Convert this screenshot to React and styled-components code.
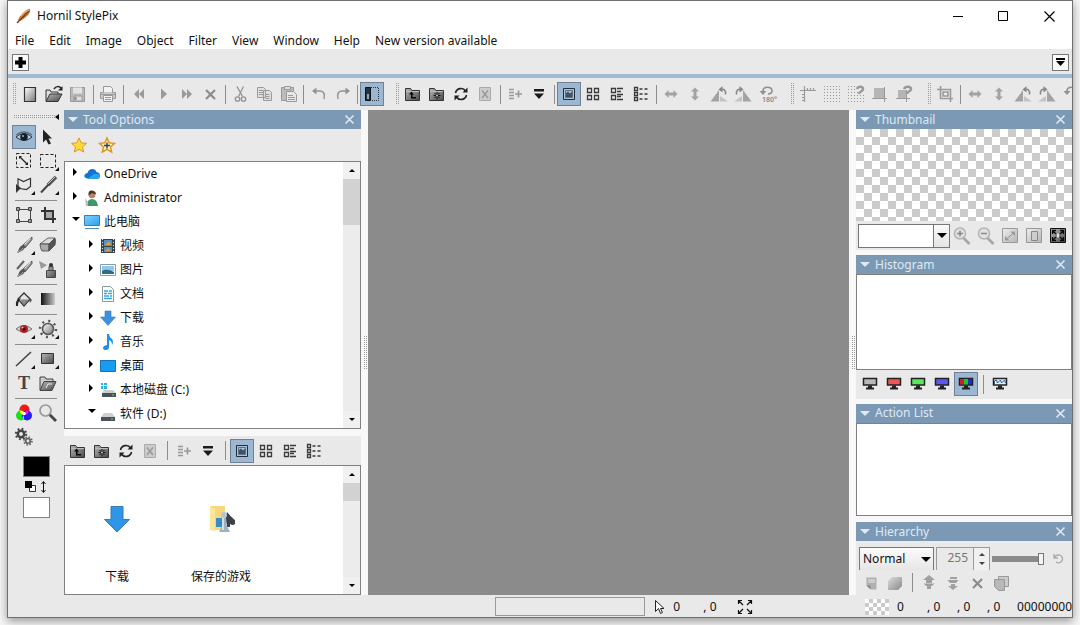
import React, { useState } from "react";
import styled, { createGlobalStyle, css } from "styled-components";

const GlobalStyle = createGlobalStyle`
    * {
        box-sizing: border-box;
    }
    body {
        margin: 0;
        background: #f6f6f6;
        color: #111;
        font-family: "Noto Sans", "Noto Sans CJK SC", sans-serif;
        font-size: 12px;
        line-height: 16px;
    }
    button, input, select {
        font: inherit;
        color: inherit;
        margin: 0;
        padding: 0;
        border: 0;
        border-radius: 0;
        background: none;
    }
    svg {
        display: block;
        flex: none;
    }
`

const Desktop = styled.div`
    display: flex;
    height: 100vh;
    min-height: 600px;
    padding: 0 7px 7px;
    overflow: hidden;
`
const Window = styled.div`
    flex: 1;
    min-width: 0;
    display: flex;
    flex-direction: column;
    border: 1px solid #707070;
    background: #e9e9e9;
    box-shadow: 0 3px 9px rgba(0, 0, 0, 0.4);
`
const TitleBar = styled.header`
    display: flex;
    align-items: center;
    height: 30px;
    padding-left: 8px;
    background: white;
    h1 {
        flex: 1;
        margin: 0 0 0 5px;
        font-size: 12px;
        font-weight: 400;
    }
`
const WindowButton = styled.button`
    display: grid;
    place-items: center;
    width: 46px;
    height: 30px;
    &:hover {
        background: #e5e5e5;
    }
`
const MenuBar = styled.nav`
    display: flex;
    height: 18px;
    padding-left: 7px;
    gap: 15px;
    background: white;
    button {
        line-height: 20px;
        white-space: nowrap;
    }
`
const TabBar = styled.div`
    display: flex;
    align-items: center;
    justify-content: space-between;
    height: 29px;
    padding: 1px 3px 0 4px;
    border-bottom: 4px solid #a0bad2;
`
const TabButton = styled.button`
    display: grid;
    place-items: center;
    width: 17px;
    height: 17px;
    border: 1px solid #777;
    background: #fafafa;
`
const ToolBar = styled.div`
    display: flex;
    align-items: center;
    gap: 7px;
    height: 32px;
    overflow: hidden;
`
const ToolGroup = styled.div`
    display: flex;
    flex: none;
    align-items: center;
`
const dots = css`
    background-image: conic-gradient(#9a9a9a 25%, transparent 0);
    background-size: 2px 2px;
`
const Grip = styled.span`
    width: 4px;
    height: 22px;
    margin: 0 2px 0 4px;
    ${dots}
`
const ToolButton = styled.button`
    position: relative;
    display: grid;
    place-items: center;
    flex: none;
    width: 24px;
    height: 24px;
    ${({ $active }) => $active && css`
        background: #9bb7d2;
        box-shadow: inset 0 0 0 1px #6f8193;
    `}
`
const Corner = styled.i`
    position: absolute;
    right: 1px;
    bottom: 2px;
    border: 2px solid transparent;
    border-right-color: #111;
    border-bottom-color: #111;
`
const Separator = styled.span`
    display: flex;
    justify-content: center;
    flex: none;
    width: ${({ $wide }) => ($wide ? 10 : 6)}px;
    height: 19px;
    &::before {
        content: "";
        width: 1px;
        background: #8d8d8d;
    }
`
const Main = styled.main`
    flex: 1;
    min-height: 0;
    display: grid;
    grid-template-columns: 56px 297px 7px minmax(0, 1fr) 7px 216px;
`
const ToolBox = styled.aside`
    display: flex;
    flex-direction: column;
    padding: 0 4px;
`
const ToolBoxGrip = styled.div`
    display: flex;
    align-items: center;
    justify-content: space-between;
    height: 15px;
    padding: 0 1px 2px;
    span {
        width: 42px;
        height: 4px;
        ${dots}
    }
`
const ToolRow = styled.div`
    display: flex;
`
const ToolRule = styled.hr`
    width: 42px;
    height: 6px;
    margin: 0 3px;
    border: 0;
    background: linear-gradient(#8d8d8d, #8d8d8d) center / 100% 1px no-repeat;
`
const Colors = styled.div`
    display: flex;
    flex-direction: column;
    align-items: center;
    gap: 3px;
    padding-top: 7px;
`
const Swatch = styled.button`
    width: 27px;
    height: 21px;
    border: 1px solid #808080;
    background: ${({ $color }) => $color};
`
const Column = styled.div`
    display: flex;
    flex-direction: column;
    min-width: 0;
    min-height: 0;
`
const Splitter = styled.div`
    display: flex;
    align-items: center;
    justify-content: center;
    background: #f8f8f8;
    span {
        width: 4px;
        height: 34px;
        ${dots}
    }
`
const Gap = styled.div`
    flex: none;
    height: ${({ $size }) => $size || 5}px;
    background: #f8f8f8;
`
const PanelHeader = styled.header`
    display: flex;
    align-items: center;
    flex: none;
    height: 19px;
    padding: 0 6px 0 4px;
    background: #7b99b5;
    color: #dfeaf4;
    h2 {
        flex: 1;
        margin: 0 0 0 5px;
        font-size: 12px;
        font-weight: 400;
    }
`
const StarRow = styled.div`
    display: flex;
    align-items: center;
    flex: none;
    gap: 4px;
    height: 32px;
    padding-left: 3px;
`
const Box = styled.div`
    flex: ${({ $grow }) => $grow} 1 0;
    display: flex;
    min-height: 0;
    border: 1px solid #808080;
    background: white;
    overflow: hidden;
`
const Tree = styled.ul`
    flex: 1;
    margin: 0;
    padding: 0;
    list-style: none;
    overflow: hidden;
`
const TreeRow = styled.li`
    display: flex;
    align-items: center;
    height: 24px;
    padding-left: ${({ $level }) => 3 + $level * 16}px;
    button {
        height: 24px;
    }
    span {
        margin-left: 4px;
    }
`
const ScrollBar = styled.div`
    display: flex;
    flex-direction: column;
    width: 17px;
    background: #ececec;
    button {
        display: grid;
        place-items: center;
        height: 17px;
        background: #f0f0f0;
    }
`
const ScrollTrack = styled.div`
    flex: 1;
    &::before {
        content: "";
        display: block;
        height: ${({ $thumb }) => $thumb}px;
        background: #d2d2d2;
    }
`
const PanelTools = styled.div`
    display: flex;
    align-items: center;
    flex: none;
    height: 29px;
    padding-left: 2px;
`
const Files = styled.div`
    flex: 1;
    display: flex;
`
const FileItem = styled.button`
    display: flex;
    flex-direction: column;
    align-items: center;
    justify-content: flex-end;
    gap: 36px;
    width: 104px;
    padding-bottom: 9px;
`
const Canvas = styled.section`
    background: #8b8b8b;
`
const checker = css`
    background: white repeating-conic-gradient(#cbcbcb 0 25%, white 0 50%);
`
const Preview = styled.div`
    flex: none;
    height: 92px;
    ${checker}
    background-size: 16px 16px;
`
const ZoomBox = styled.div`
    display: flex;
    width: 92px;
    height: 24px;
    border: 1px solid #777;
    background: white;
    input {
        flex: 1;
        min-width: 0;
        padding: 0 4px;
    }
    button {
        display: grid;
        place-items: center;
        width: 16px;
        border-left: 1px solid #777;
        background: linear-gradient(#fafafa, #e4e4e4);
    }
`
const LayerControls = styled.div`
    display: flex;
    align-items: center;
    flex: none;
    gap: 2px;
    height: 29px;
    padding: 6px 2px 0 3px;
`
const BlendMode = styled.label`
    position: relative;
    width: 75px;
    select {
        appearance: none;
        width: 100%;
        height: 23px;
        padding-left: 3px;
        border: 1px solid #777;
        border-bottom: 0;
        background: linear-gradient(#fbfbfb, #e6e6e6);
    }
    svg {
        position: absolute;
        right: 3px;
        top: 10px;
        pointer-events: none;
    }
`
const Opacity = styled.div`
    display: flex;
    width: 54px;
    height: 23px;
    border: 1px solid #999;
    border-bottom: 0;
    color: #777;
    input {
        flex: 1;
        min-width: 0;
        padding: 0 5px 2px;
        text-align: right;
        border-right: 1px solid #999;
    }
    div {
        display: flex;
        flex-direction: column;
        justify-content: space-evenly;
        width: 15px;
        background: #f0f0f0;
    }
    button {
        display: grid;
        place-items: center;
    }
`
const Slider = styled.input`
    appearance: none;
    width: 52px;
    height: 14px;
    &::-webkit-slider-runnable-track {
        height: 6px;
        background: #8b8b8b;
    }
    &::-webkit-slider-thumb {
        appearance: none;
        width: 6px;
        height: 12px;
        margin-top: -3px;
        border: 1px solid #777;
        background: #f4f4f4;
    }
`
const LayerTools = styled.div`
    display: flex;
    align-items: center;
    flex: none;
    height: 25px;
    padding-left: 3px;
`
const StatusBar = styled.footer`
    display: flex;
    align-items: center;
    flex: none;
    height: 22px;
    padding-top: 1px;
    overflow: hidden;
    white-space: pre;
`
const StatusLeft = styled.div`
    flex: 638;
    display: flex;
    justify-content: flex-end;
`
const StatusMiddle = styled.div`
    flex: 220;
    display: flex;
    align-items: center;
`
const Progress = styled.div`
    width: 150px;
    height: 19px;
    border: 1px solid #999;
`
const Value = styled.span`
    width: ${({ $wide }) => ($wide ? 34 : 30)}px;
`
const Pixel = styled.span`
    width: 24px;
    height: 16px;
    margin-right: 8px;
    ${checker}
    background-size: 8px 8px;
`

const folder = (
    <>
        <path d="M4.500 18.500V6.500h5l1.500 2h7.500v10z" fill="url(#dark)" stroke="#333" />
        <path d="M5 9.500h13" stroke="#bbb" />
    </>
)
const monitor = (fill) => (
    <>
        <path d="M5.500 6.500h13v6.500h-13z" fill={fill} stroke="#222" strokeWidth="1.500" />
        <path d="M10 13.500h4v2.500h-4zM8 15.500h8v2H8z" fill="#222" />
    </>
)
const brush = (
    <>
        <path d="M20 4l-9 8 2.500 2.500 6.500-8z" fill="#999" stroke="#444" strokeWidth=".8" />
        <path d="M11.500 11.500l2.500 2.500c-2 1-2 4-9 6 2-2 1-6 6.500-8.500z" fill="#555" />
        <path d="M18.500 5.500l-6 6" stroke="#ddd" />
        <path d="M5 19c3-1 5-2 6-4" stroke="#aaa" fill="none" />
    </>
)
const magnifier = (
    <>
        <path d="M13.500 14l6 6" stroke="#aaa" strokeWidth="3" />
        <circle cx="10" cy="9.500" r="5.500" fill="#e2e2e2" stroke="#b4b4b4" strokeWidth="1.500" />
    </>
)
const halfTurn = (
    <>
        <path d="M8 10V9c0-5 9-5 9-.500 0 2.500-1.500 3.500-4 3.500" fill="none" stroke="#909090" strokeWidth="1.600" />
        <path d="M4.500 9h7L8 13z" fill="#909090" />
    </>
)
const layer = "M7.500 6.500h10v12h-6l-4-4z"

// all drawings share a 24px grid
const icons = {
    newFile: <path d="M6.500 5.500h11v14h-11z" fill="url(#light)" stroke="#333" strokeWidth="1.200" />,
    open: (
        <>
            <path d="M4 19V8h4l1 2h7v3l2-1" fill="#ddd" stroke="#333" />
            <path d="M4 19.500L8 12h12l-4 7.500z" fill="url(#dark)" stroke="#333" />
            <path d="M12 7c2-3 5-3 7-1" fill="none" stroke="#222" strokeWidth="1.500" />
            <path d="M20.500 4v4.500H16z" fill="#222" />
        </>
    ),
    save: (
        <>
            <path d="M4.500 5.500h14v14h-14z" fill="#b9b9b9" stroke="#999" />
            <path d="M7 5.500h9v6H7z" fill="#e2e2e2" />
            <path d="M8 14h8v5H8z" fill="#ddd" stroke="#999" />
            <path d="M9.500 15v3" stroke="#888" strokeWidth="2" />
        </>
    ),
    print: (
        <>
            <path d="M4.500 10.500h15v6h-15z" fill="#ccc" stroke="#999" />
            <path d="M7.500 10.500v-6h7l2 2v4" fill="#f2f2f2" stroke="#999" />
            <path d="M7.500 13.500h9v6h-9z" fill="#f2f2f2" stroke="#999" />
            <path d="M9 15.500h6M9 17.500h6M4.500 12.500h15" stroke="#999" />
        </>
    ),
    rewind: <path d="M13 7v10l-5-5zM18 7v10l-5-5z" fill="#9a9a9a" />,
    play: <path d="M11 6.500v11l6-5.500z" fill="#9a9a9a" />,
    forward: <path d="M8 7v10l5-5zM13 7v10l5-5z" fill="#9a9a9a" />,
    cross: <path d="M8 8l9 9M17 8l-9 9" stroke="#8c8c8c" strokeWidth="2.200" />,
    cut: (
        <g fill="none" stroke="#929292" strokeWidth="1.300">
            <path d="M9 4.500l5.500 10M15.500 4.500l-5 10" />
            <circle cx="9.500" cy="17" r="2.200" />
            <circle cx="15.500" cy="17" r="2.200" />
        </g>
    ),
    copy: (
        <g stroke="#999" fill="#e0e0e0">
            <path d="M5.500 5.500h6l2 2v8h-8zM11.500 8.500h6l2 2v8h-8z" />
            <path d="M7 8.500h4M7 10.500h4M7 12.500h4M13.500 12.500h4M13.500 14.500h4M13.500 16.500h4" />
        </g>
    ),
    paste: (
        <g stroke="#999" fill="#bbb">
            <path d="M5.500 5.500h12v13h-12z" />
            <path d="M8.500 4.500h6v3h-6z" fill="#ddd" />
            <path d="M10.500 9.500h7l3 3v7h-10z" fill="#e8e8e8" />
            <path d="M12 13.500h5M12 15.500h7M12 17.500h7" />
        </g>
    ),
    undo: (
        <g stroke="#929292" fill="none" strokeWidth="1.500">
            <path d="M9 9h5c4 0 5 3 4 8" />
            <path d="M6 9l4.500-3.500v7z" fill="#929292" stroke="none" />
        </g>
    ),
    redo: (
        <g stroke="#929292" fill="none" strokeWidth="1.500">
            <path d="M17 9h-5c-4 0-5 3-4 8" />
            <path d="M20 9l-4.500-3.500v7z" fill="#929292" stroke="none" />
        </g>
    ),
    sidebar: (
        <>
            <path d="M5.500 5.500h5v13h-5z" fill="#26323e" stroke="#111" />
            <path d="M7 12h2v5H7z" fill="#8ba5bf" />
            <path d="M11 5.500h7.500v13H11" fill="none" stroke="#26323e" strokeDasharray="1 1" />
        </>
    ),
    folderUp: <>{folder}<path d="M8 12.500l2.500-3 2.500 3h-1.500v2.500H15v1.500h-5v-4z" fill="#050505" /></>,
    folderNew: (
        <>
            {folder}
            <path d="M12 10v7.500M8.500 13.500h7M9.500 11l5 5M14.500 11l-5 5" stroke="#111" />
            <circle cx="12" cy="13.500" r="1" fill="#ccc" />
        </>
    ),
    refresh: (
        <g fill="none" stroke="#222" strokeWidth="1.600">
            <path d="M6.500 11c1-5 7.500-6 10-2M17.500 13c-1 5-7.500 6-10 2" />
            <path d="M18.500 5.500v5h-5zM5.500 18.500v-5h5z" fill="#222" stroke="none" />
        </g>
    ),
    boxCross: (
        <>
            <path d="M6.500 5.500h11v13h-11z" fill="#ccc" stroke="#aaa" />
            <path d="M9 8.500l6 7.500M15 8.500L9 16" stroke="#999" strokeWidth="1.500" />
        </>
    ),
    listAdd: <path d="M6 7.500h5M6 10.500h5M6 13.500h5M6 16.500h5M12 12h7M15.500 8.500v7" stroke="#999" strokeWidth="1.700" />,
    dropdown: <path d="M7 7h10v2.500H7zM7 11.500h10L12 17z" fill="#1b1b1b" />,
    picture: (
        <>
            <path d="M6.500 6.500h11v11h-11z" fill="#a9c3da" stroke="#222d38" />
            <path d="M8.500 8.500h7v7h-7z" fill="#a9c3da" stroke="#5c7187" />
            <path d="M9 15v-4l2-1.500 2 2 2-2V15z" fill="#3e5266" />
        </>
    ),
    tiles: <path d="M6.500 6.500h4v4h-4zM13.500 6.500h4v4h-4zM6.500 13.500h4v4h-4zM13.500 13.500h4v4h-4z" fill="#eee" stroke="#3a3a3a" strokeWidth="1.300" />,
    content: (
        <g stroke="#3a3a3a" fill="#eee" strokeWidth="1.300">
            <path d="M6.500 6.500h4v4h-4zM6.500 13.500h4v4h-4z" />
            <path d="M12 6.500h6M12 9.500h4M12 12.500h6M12 14.500h4M12 17.500h6" />
        </g>
    ),
    details: (
        <g stroke="#3a3a3a" fill="#eee" strokeWidth="1.300">
            <path d="M5.500 5.500h3v3h-3zM5.500 10.500h3v3h-3zM5.500 15.500h3v3h-3z" />
            <path d="M10.500 7h8M10.500 12h8M10.500 17h8" strokeDasharray="3 2" />
        </g>
    ),
    flipH: <path d="M5.500 12l4-4v2.500h5V8l4 4-4 4v-2.500h-5V16z" fill="#a3a3a3" />,
    flipV: <path d="M12 5.500l4 4h-2.500v5H16l-4 4-4-4h2.500v-5H8z" fill="#a3a3a3" />,
    rotateLeft: (
        <>
            <path d="M12 8v11.500H3.500z" fill="#a3a3a3" />
            <path d="M13 14l8 5.500h-8z" fill="#c2c2c2" />
            <path d="M14 7.500c3-1 5 1 4.500 5" fill="none" stroke="#888" strokeWidth="1.500" />
            <path d="M11.500 7.500L15.500 4v6.500z" fill="#888" />
        </>
    ),
    rotateRight: (
        <>
            <path d="M12 8v11.500h8.500z" fill="#a3a3a3" />
            <path d="M11 14l-8 5.500h8z" fill="#c2c2c2" />
            <path d="M10 7.500c-3-1-5 1-4.500 5" fill="none" stroke="#888" strokeWidth="1.500" />
            <path d="M12.500 7.500L8.500 4v6.500z" fill="#888" />
        </>
    ),
    rotateHalf: (
        <>
            {halfTurn}
            <text x="7" y="20" fontSize="7" fontWeight="600" fill="#888">180°</text>
        </>
    ),
    halfTurn,
    ruler: <path d="M4 8.500h16M8.500 4v16M11.500 6v2M14.500 6v2M17.500 6v2M6 12.500h2M6 15.500h2M6 18.500h2" stroke="#9a9a9a" strokeWidth="1.200" />,
    dots: <path d="M4 4.500h16M4 7.500h16M4 10.500h16M4 13.500h16M4 16.500h16M4 19.500h16" stroke="#999" strokeDasharray="1 2" />,
    dotsSnap: (
        <>
            <path d="M4 4.500h7M4 7.500h7M4 10.500h10M4 13.500h16M4 16.500h16M4 19.500h16" stroke="#999" strokeDasharray="1 2" />
            <path d="M13 7c1-3 6-3 6 0s-4 2-4 5" fill="none" stroke="#999" strokeWidth="2.500" />
        </>
    ),
    guide: <><path d="M6 6h10v10H6z" fill="#b5b5b5" /><path d="M4 16.500h15M16.500 5v15" stroke="#9a9a9a" /></>,
    guideSnap: (
        <>
            <path d="M6 8h9v8H6z" fill="#b5b5b5" />
            <path d="M4 16.500h14M14.500 8v12" stroke="#9a9a9a" />
            <path d="M12 7c1-3 7-3 7 0s-4 2-4 5" fill="none" stroke="#999" strokeWidth="2.500" />
        </>
    ),
    cropGrey: <path d="M4 7.500h13.500V20M7.500 4v12.500H20M10 10h5v4h-5z" fill="none" stroke="#9a9a9a" strokeWidth="1.600" />,
    eye: (
        <>
            <path d="M4 12q8-7 16 0-8 7-16 0z" fill="#b9cbd9" stroke="#2c3a46" />
            <circle cx="12" cy="12" r="3.800" fill="#10202c" />
            <path d="M4 10q8-6 16 0" stroke="#5a6f80" fill="none" strokeWidth="1.300" />
            <circle cx="11" cy="11" r="1" fill="#9bd" />
        </>
    ),
    pointer: <path d="M7 4.500v13l3-3 2.500 5 2.500-1-2.500-5H16z" fill="#222" />,
    selectScale: (
        <g fill="none" stroke="#222">
            <path d="M4.500 4.500h14v14h-14z" strokeDasharray="3 2" />
            <path d="M8 8l7 7" strokeWidth="1.300" />
            <path d="M7 7h3l-3 3zM16 16h-3l3-3z" fill="#222" stroke="none" />
        </g>
    ),
    marquee: <path d="M4.500 5.500h15v13h-15z" fill="none" stroke="#222" strokeDasharray="3 2" />,
    lasso: (
        <>
            <path d="M5.500 5.500l6 3 7-3v8l-4 3-7-1M6 6v8" fill="none" stroke="#333" strokeWidth="1.200" />
            <path d="M4 11v9l5-5z" fill="#333" />
        </>
    ),
    knife: <><path d="M20 4l-8 8" stroke="#555" strokeWidth="3.500" /><path d="M14 10l-9 9.500" stroke="#444" strokeWidth="2" /><path d="M19 4l-7 7" stroke="#bbb" /></>,
    transform: (
        <>
            <path d="M6.500 6.500h12v12h-12z" fill="none" stroke="#444" />
            <path d="M4.500 4.500h3v3h-3zM16.500 4.500h3v3h-3zM4.500 16.500h3v3h-3zM16.500 16.500h3v3h-3z" fill="#999" stroke="#444" />
        </>
    ),
    crop: (
        <>
            <path d="M5 8h12v12M9 4v12h11" fill="none" stroke="#333" strokeWidth="2" />
            <path d="M10 9h6v6h-6z" fill="#aaa" />
        </>
    ),
    brush,
    eraser: (
        <g stroke="#444" strokeWidth=".8">
            <path d="M4 11l8-6h7l-6 6z" fill="#ddd" />
            <path d="M4 11h9v7H6q-2-3-2-7z" fill="#aaa" />
            <path d="M13 11l6-6q1 3 0 7l-6 6z" fill="#555" />
        </g>
    ),
    brushes: <>{brush}<path d="M12 4l-7 8" stroke="#666" strokeWidth="2" /></>,
    spray: (
        <>
            <path d="M3 4l8 4-6 4z" fill="#999" />
            <path d="M10.500 13.500h9v7h-9zM13 9.500h4v4h-4z" fill="url(#dark)" stroke="#444" />
            <circle cx="15" cy="8" r="2" fill="#333" />
        </>
    ),
    bucket: (
        <>
            <path d="M6 12l6-6 6 6-6 7z" fill="#e4e4e4" stroke="#333" strokeWidth="1.300" />
            <path d="M8 12.500h9l-5 5.500z" fill="#888" />
            <path d="M4 19q-1-7 5-8-3 3-3 8z" fill="#222" />
            <path d="M16 9l4 4-2 3z" fill="#555" />
        </>
    ),
    gradient: <path d="M5 6h14v12H5z" fill="url(#fade)" />,
    redEye: (
        <>
            <path d="M4 12q8-7 16 0-8 6-16 0z" fill="#d8cccc" stroke="#777" />
            <circle cx="12" cy="12" r="4" fill="#b02020" />
            <circle cx="12" cy="12" r="1.500" fill="#300" />
            <circle cx="10.500" cy="10.500" r="1" fill="#f3bbbb" />
        </>
    ),
    sun: (
        <>
            <circle cx="12" cy="12" r="8" fill="none" stroke="#555" strokeWidth="2.500" strokeDasharray="2 4.283" />
            <circle cx="12" cy="12" r="5.500" fill="url(#light)" stroke="#555" strokeWidth="1.500" />
        </>
    ),
    line: <path d="M4 19L19 5" stroke="#444" strokeWidth="1.600" />,
    rect: <path d="M5.500 6.500h12v10h-12z" fill="url(#dark)" stroke="#333" />,
    shape: (
        <>
            <path d="M4 19V6h5l1 2h7v3" fill="#ccc" stroke="#444" />
            <path d="M4 19.500l4-9h12l-4 9z" fill="url(#dark)" stroke="#444" />
            <path d="M10 17l2-4h4" stroke="#eee" fill="none" />
        </>
    ),
    rgb: (
        <>
            <circle cx="12.500" cy="8.500" r="5" fill="#f01818" />
            <circle cx="9" cy="14.500" r="5" fill="#18e018" />
            <circle cx="15" cy="14.500" r="5" fill="#2020f0" />
            <path d="M8 9.500q4 0 4 4-4 1-4-4z" fill="#ff0" />
            <path d="M16.500 9.500q-4 0-4 4 4 1 4-4z" fill="#f0f" />
            <path d="M12 14v5q-3-2 0-5z" fill="#0ff" />
            <circle cx="12" cy="12.500" r="1.800" fill="#fff" />
        </>
    ),
    zoom: (
        <>
            <path d="M13 13l7 7" stroke="#444" strokeWidth="2.800" />
            <circle cx="9.500" cy="9.500" r="5.500" fill="#e8e8e8" stroke="#999" strokeWidth="1.700" />
        </>
    ),
    gears: (
        <g fill="none" stroke="#444">
            <circle cx="9" cy="9" r="3.200" strokeWidth="2.500" />
            <circle cx="9" cy="9" r="5.200" strokeWidth="2" strokeDasharray="1.800 2.280" />
            <g stroke="#666">
                <circle cx="16" cy="16" r="2.300" strokeWidth="1.800" />
                <circle cx="16" cy="16" r="4" strokeWidth="1.600" strokeDasharray="1.500 1.640" />
            </g>
        </g>
    ),
    star: <path d="M12 5l2.200 4.800 5.300.6-4 3.500 1.200 5.100-4.700-2.700L7.300 19l1.200-5.100-4-3.500 5.300-.6z" fill="#ffdc3c" stroke="#e09420" />,
    starAdd: (
        <>
            <path d="M12 5l2.200 4.800 5.300.6-4 3.500 1.200 5.100-4.700-2.700L7.300 19l1.200-5.100-4-3.500 5.300-.6z" fill="#fff2ae" stroke="#e09420" strokeWidth="1.400" />
            <path d="M12 9.500v6M9 12.500h6" stroke="#26426e" strokeWidth="1.400" />
        </>
    ),
    zoomIn: <>{magnifier}<path d="M7 9.500h6M10 6.500v6" stroke="#888" strokeWidth="1.500" /></>,
    zoomOut: <>{magnifier}<path d="M7 9.500h6" stroke="#888" strokeWidth="1.500" /></>,
    fitScreen: (
        <>
            <path d="M4.500 4.500h15v14h-15z" fill="url(#pale)" stroke="#999" />
            <path d="M8 15.500l8-7" stroke="#999" />
            <path d="M12.500 7.500H17V12zM7 12v4.500h4.500z" fill="#999" />
        </>
    ),
    actual: <><path d="M4.500 4.500h15v14h-15z" fill="url(#pale)" stroke="#999" /><path d="M9.500 7.500h6v9h-6z" fill="#ccc" stroke="#888" /></>,
    expand: (
        <>
            <path d="M4.500 4.500h15v14h-15z" fill="url(#dark)" stroke="#111" />
            <path d="M6.500 10V6.500H10M14 6.500h3.500V10M17.500 13v3.500H14M10 16.500H6.500V13M7 7l3 3M17 7l-3 3M17 16l-3-3M7 16l3-3" fill="none" stroke="#080808" strokeWidth="1.300" />
            <path d="M11 9.500h2v4h-2z" fill="#ddd" />
        </>
    ),
    monGrey: monitor("#b8b8b8"),
    monRed: monitor("#ee5555"),
    monGreen: monitor("#5ce85c"),
    monBlue: monitor("#5a5af0"),
    monRgb: <>{monitor("#2828d0")}<path d="M6 7h4v5.500H6z" fill="#d02020" /><path d="M10 7h4v5.500h-4z" fill="#20c820" /></>,
    monWave: <>{monitor("#e4f6f4")}<path d="M6.500 12V9l2-1 1 3 3-3 1 3 3-3 1 3" stroke="#2c5a9c" fill="none" /></>,
    layerNew: <><path d={layer} fill="#b0b0b0" /><path d="M7.500 14.500h4v4z" fill="#888" /><path d="M9 8h7v4H9z" fill="#ccc" /></>,
    layerCube: <path d="M9 6h10v9l-4 4H5v-9z" fill="url(#pale2)" />,
    layerUp: <path d="M12 4l6 5h-3v3H9V9H6zM6.500 12.500h11L15 15h-1v3h-4v-3H9z" fill="#a0a0a0" />,
    layerDown: <path d="M12 19l5-4h-3v-2h-4v2H7zM6.500 9h11L15 12H9zM9 6h7v2H9z" fill="#a0a0a0" />,
    layerCopy: (
        <>
            <path d="M9.500 5.500h10v10h-10z" fill="#ccc" stroke="#999" />
            <path d="M5.500 8.500h10v11h-6l-4-4z" fill="#b8b8b8" stroke="#999" />
        </>
    ),
    resetGrey: <path d="M9 10a4 4 0 1 1 1 5M8 7v4h4" fill="none" stroke="#aaa" strokeWidth="1.400" />,
}

const treeIcons = {
    cloud: (
        <>
            <path d="M3.500 12.500q-4-.500-3-3.500 1-2 3-2 1-4 5-4 3 0 4 3 3.500.500 3.500 3.500 0 3-3 3z" fill="#1374cf" />
            <path d="M3 13l7-5q5-1 6 2 0 3-3 3z" fill="#2aa3ec" />
        </>
    ),
    user: (
        <>
            <path d="M3 16q0-7 5-7t6 7z" fill="#3f9768" />
            <circle cx="8" cy="5" r="3.300" fill="#b08664" />
            <path d="M4.500 5.500Q4 0 8 .500t4 4L8 3z" fill="#4b3426" />
            <path d="M1 8l3 4v4H2z" fill="#bbb" />
        </>
    ),
    computer: <><path d="M.500 1.500h15v10H.500z" fill="url(#screen)" stroke="#3a7fae" /><path d="M1 14.500h14" stroke="#5591b8" /></>,
    video: (
        <>
            <path d="M1 1h14v14H1z" fill="#39424a" />
            <path d="M4 2h8v6H4zM4 9h8v5H4z" fill="#5b8fc4" />
            <path d="M5 7l4-4 2 4zM5 14l3-4 3 3z" fill="#d8a03a" />
            <path d="M2.500 1v14M13.500 1v14" stroke="#eee" strokeDasharray="1 2" />
        </>
    ),
    image: <><path d="M.500 2.500h15v11H.500z" fill="#fff" stroke="#8a9aa6" /><path d="M2 4h12v5H2z" fill="#8cc8f0" /><path d="M2 9q5-3 12 1v2H2z" fill="#2f6d80" /></>,
    doc: <><path d="M2.500.500h8l3 3v12h-11z" fill="#fff" stroke="#8e989e" /><path d="M4 5h4M9 5h3M4 7.500h3M8 7.500h4M4 10h5M4 12.500h8M10 10h2" stroke="#3ba2d8" strokeWidth="1.500" /></>,
    download: <path d="M5 1h6v6h4.500L8 15.500.500 7H5z" fill="#3d92e0" stroke="#3b78b4" strokeWidth=".6" />,
    music: <path d="M7 0h2q0 3 3 5 2 3 0 6 0-4-3-5v7q0 3-3 3t-3-2 4-3z" fill="#1e90ea" />,
    desktop: <path d="M.500 2.500h15v11H.500z" fill="#189cf0" stroke="#1670b8" />,
    systemDisk: (
        <>
            <path d="M1 1h2v2H1zM4 1h3v2H4zM1 4h2v3H1zM4 4h3v3H4z" fill="#26b4e8" />
            <path d="M4 8h9l3 3H2z" fill="#ccc" />
            <path d="M2 11h14v4H2z" fill="#4c5358" />
            <path d="M12 13h2" stroke="#5de070" />
        </>
    ),
    disk: <><path d="M4 7h8l3 4H1z" fill="#d0d0d0" /><path d="M1 11h14v4H1z" fill="#4c5358" /><path d="M11 13h2" stroke="#5de070" /></>,
}

const Icon = ({ name }) => (
    <svg width="24" height="24" viewBox="0 0 24 24" aria-hidden="true">
        {name === "text"
            ? <text x="12" y="18" textAnchor="middle" fontFamily="Liberation Serif, serif" fontWeight="700" fontSize="18" fill="#444">T</text>
            : icons[name]}
    </svg>
)

const Arrow = ({ dir = "down", size = 8, color = "#000" }) => (
    <svg width={size} height={size / 2} viewBox="0 0 8 4" aria-hidden="true">
        <path d={dir === "up" ? "M0 4h8L4 0z" : "M0 0h8L4 4z"} fill={color} />
    </svg>
)

// shared gradients for the small drawings
const Gradients = () => (
    <svg width="0" height="0" style={{ position: "absolute" }} aria-hidden="true">
        <defs>
            <linearGradient id="dark" x1="0" y1="0" x2="1" y2="1"><stop stopColor="#b8b8b8" /><stop offset="1" stopColor="#484848" /></linearGradient>
            <linearGradient id="light" x1="0" y1="0" x2="1" y2="1"><stop stopColor="#fff" /><stop offset="1" stopColor="#777" /></linearGradient>
            <linearGradient id="pale" x1="0" y1="0" x2="1" y2="1"><stop stopColor="#efefef" /><stop offset="1" stopColor="#b4b4b4" /></linearGradient>
            <linearGradient id="pale2" x1="0" y1="0" x2="1" y2="1"><stop stopColor="#ddd" /><stop offset="1" stopColor="#888" /></linearGradient>
            <linearGradient id="fade"><stop stopColor="#111" /><stop offset="1" stopColor="#ccc" /></linearGradient>
            <linearGradient id="screen" x1="0" y1="0" x2="1" y2="1"><stop stopColor="#7fd2ff" /><stop offset="1" stopColor="#2ba0ea" /></linearGradient>
        </defs>
    </svg>
)

const menus = ["File", "Edit", "Image", "Object", "Filter", "View", "Window", "Help", "New version available"]

const browseTools = ["folderUp", "folderNew", "refresh", "boxCross", "|", "listAdd", "dropdown", "|", "picture*", "tiles", "content", "details"]
const rotateTools = ["flipH", "flipV", "rotateLeft", "rotateRight"]
const toolbarGroups = [
    ["newFile", "open", "save", "|", "print", "|", "rewind", "play", "forward", "cross", "|", "cut", "copy", "paste", "|", "undo", "redo", "|", "sidebar*"],
    [...browseTools, "|", ...rotateTools, "rotateHalf"],
    ["ruler", "dots", "dotsSnap", "guide", "guideSnap"],
    ["cropGrey", "|", ...rotateTools, "halfTurn"],
]

// "+" marks a tool that opens a flyout
const toolRows = [
    ["eye", "pointer"],
    ["selectScale", "marquee+"],
    ["lasso+", "knife+"],
    null,
    ["transform", "crop"],
    null,
    ["brush+", "eraser"],
    ["brushes", "spray"],
    null,
    ["bucket", "gradient"],
    null,
    ["redEye+", "sun+"],
    null,
    ["line+", "rect+"],
    ["text", "shape"],
    null,
    ["rgb", "zoom"],
    ["gears"],
]

const treeItems = [
    { label: "OneDrive", icon: "cloud", level: 0 },
    { label: "Administrator", icon: "user", level: 0 },
    { label: "此电脑", icon: "computer", level: 0, open: true },
    { label: "视频", icon: "video", level: 1 },
    { label: "图片", icon: "image", level: 1 },
    { label: "文档", icon: "doc", level: 1 },
    { label: "下载", icon: "download", level: 1 },
    { label: "音乐", icon: "music", level: 1 },
    { label: "桌面", icon: "desktop", level: 1 },
    { label: "本地磁盘 (C:)", icon: "systemDisk", level: 1 },
    { label: "软件 (D:)", icon: "disk", level: 1, open: true },
]

const Tools = ({ items, wide }) => items.map((item, i) => {
    if (item === "|") {
        return <Separator key={i} $wide={wide} />
    }
    const name = item.replace("*", "")
    return (
        <ToolButton key={i} type="button" aria-label={name} $active={item.endsWith("*")}>
            <Icon name={name} />
        </ToolButton>
    )
})

const Header = ({ title }) => (
    <PanelHeader>
        <Arrow size={10} color="#dfeaf4" />
        <h2>{title}</h2>
        <button type="button" aria-label={`Close ${title}`}>
            <svg width="11" height="11" viewBox="0 0 11 11">
                <path d="M1.500 1.500l8 8M9.500 1.500l-8 8" stroke="#dfeaf4" strokeWidth="1.600" />
            </svg>
        </button>
    </PanelHeader>
)

const Scroll = ({ thumb }) => (
    <ScrollBar>
        <button type="button" aria-label="Scroll up"><Arrow dir="up" size={6} /></button>
        <ScrollTrack $thumb={thumb} />
        <button type="button" aria-label="Scroll down"><Arrow size={6} /></button>
    </ScrollBar>
)

const App = () => {
    const [tool, setTool] = useState("eye")
    const [zoom, setZoom] = useState("")
    const [opacity, setOpacity] = useState(255)

    const onOpacity = (event) => {
        setOpacity(Number(event.target.value))
    }

    return (
        <Desktop>
            <GlobalStyle />
            <Gradients />
            <Window>
                <TitleBar>
                    <svg width="16" height="16" viewBox="0 0 16 16" aria-hidden="true">
                        <path d="M1 15Q3 8 8 4t6-3q1 4-4 8t-7 4z" fill="#c87a3c" />
                        <path d="M1 15L13 3" stroke="#7a3c14" strokeWidth="1.300" />
                        <path d="M5 8q3-4 8-6" stroke="#f0b888" fill="none" />
                    </svg>
                    <h1>Hornil StylePix</h1>
                    <WindowButton type="button" aria-label="Minimize">
                        <svg width="11" height="11"><path d="M1 5.500h10" stroke="#000" /></svg>
                    </WindowButton>
                    <WindowButton type="button" aria-label="Maximize">
                        <svg width="11" height="11"><path d="M.5.5h9v9h-9z" fill="none" stroke="#000" /></svg>
                    </WindowButton>
                    <WindowButton type="button" aria-label="Close">
                        <svg width="11" height="11"><path d="M.5.5l10 10M10.500.500l-10 10" stroke="#000" strokeWidth="1.200" /></svg>
                    </WindowButton>
                </TitleBar>
                <MenuBar>
                    {menus.map((menu) => <button key={menu} type="button">{menu}</button>)}
                </MenuBar>
                <TabBar>
                    <TabButton type="button" aria-label="New tab">
                        <svg width="13" height="13"><path d="M6.500 1v11M1 6.500h11" stroke="#000" strokeWidth="4" /></svg>
                    </TabButton>
                    <TabButton type="button" aria-label="Tab list">
                        <svg width="9" height="9"><path d="M0 0h9v2H0zM0 3h9L4.500 8z" /></svg>
                    </TabButton>
                </TabBar>
                <ToolBar>
                    {toolbarGroups.map((items, i) => (
                        <ToolGroup key={i}>
                            <Grip />
                            <Tools items={items} />
                        </ToolGroup>
                    ))}
                </ToolBar>
                <Main>
                    <ToolBox>
                        <ToolBoxGrip>
                            <span />
                            <svg width="4" height="6"><path d="M4 0v6L0 3z" /></svg>
                        </ToolBoxGrip>
                        {toolRows.map((row, i) => row === null ? <ToolRule key={i} /> : (
                            <ToolRow key={i}>
                                {row.map((item) => {
                                    const name = item.replace("+", "")
                                    return (
                                        <ToolButton
                                            key={name}
                                            type="button"
                                            aria-label={name}
                                            $active={tool === name}
                                            onClick={() => setTool(name)}>
                                            <Icon name={name} />
                                            {item.endsWith("+") && <Corner />}
                                        </ToolButton>
                                    )
                                })}
                            </ToolRow>
                        ))}
                        <Colors>
                            <Swatch type="button" aria-label="Foreground color" $color="#000" />
                            <svg width="24" height="14" aria-hidden="true">
                                <path d="M5.500 5.500h6v6h-6z" fill="#fff" stroke="#333" />
                                <path d="M1 1h7v7H1z" />
                                <path d="M19.500 2v10M17.500 4l2-2.500 2 2.500M17.500 10l2 2.500 2-2.500" fill="none" stroke="#111" />
                            </svg>
                            <Swatch type="button" aria-label="Background color" $color="#fff" />
                        </Colors>
                    </ToolBox>

                    <Column>
                        <Header title="Tool Options" />
                        <StarRow>
                            <ToolButton type="button" aria-label="Favorites"><Icon name="star" /></ToolButton>
                            <ToolButton type="button" aria-label="Add favorite"><Icon name="starAdd" /></ToolButton>
                        </StarRow>
                        <Box $grow={269}>
                            <Tree>
                                {treeItems.map(({ label, icon, level, open }) => (
                                    <TreeRow key={label} $level={level}>
                                        <button type="button" aria-label={`Toggle ${label}`}>
                                            <svg width="16" height="24">
                                                <path d={open ? "M4 7h8l-4 4z" : "M5 6v8l4-4z"} />
                                            </svg>
                                        </button>
                                        <svg width="16" height="16" viewBox="0 0 16 16" aria-hidden="true">{treeIcons[icon]}</svg>
                                        <span>{label}</span>
                                    </TreeRow>
                                ))}
                            </Tree>
                            <Scroll thumb={46} />
                        </Box>
                        <Gap $size={7} />
                        <PanelTools>
                            <Tools items={browseTools} wide />
                        </PanelTools>
                        <Box $grow={129}>
                            <Files>
                                <FileItem type="button">
                                    <svg width="28" height="28" viewBox="0 0 28 28" aria-hidden="true">
                                        <path d="M8 1.500h12v13h6.500L14 27 1.500 14.500H8z" fill="#2f95e6" stroke="#3b78b4" />
                                    </svg>
                                    下载
                                </FileItem>
                                <FileItem type="button">
                                    <svg width="28" height="28" viewBox="0 0 28 28" aria-hidden="true">
                                        <path d="M3 1h15v24H3z" fill="#f7d779" />
                                        <path d="M3 1l5 3v23l-5-3z" fill="#fbe6a0" />
                                        <path d="M9 13h6v9H9z" fill="#3b8ac4" />
                                        <path d="M20 7q3 4 9 9 0 4-4 4l-2-1v3h-3v-3l-2-3z" fill="#3d4146" />
                                        <circle cx="17" cy="10" r="3" fill="#b5c6d2" />
                                        <path d="M15 13h4l1 8 3 6H12l3-6z" fill="#9db2c0" />
                                        <path d="M16 13v12" stroke="#e4eef4" strokeWidth="1.500" />
                                    </svg>
                                    保存的游戏
                                </FileItem>
                            </Files>
                            <Scroll thumb={18} />
                        </Box>
                    </Column>

                    <Splitter><span /></Splitter>
                    <Canvas aria-label="Canvas" />
                    <Splitter><span /></Splitter>

                    <Column>
                        <Header title="Thumbnail" />
                        <Preview />
                        <PanelTools>
                            <ZoomBox>
                                <input aria-label="Zoom" value={zoom} onChange={(event) => setZoom(event.target.value)} />
                                <button type="button" aria-label="Zoom levels"><Arrow size={10} /></button>
                            </ZoomBox>
                            <Tools items={["zoomIn", "zoomOut", "fitScreen", "actual", "expand"]} />
                        </PanelTools>
                        <Gap />
                        <Header title="Histogram" />
                        <Box $grow={96} />
                        <PanelTools>
                            <Tools items={["monGrey", "monRed", "monGreen", "monBlue", "monRgb*", "|", "monWave"]} wide />
                        </PanelTools>
                        <Gap />
                        <Header title="Action List" />
                        <Box $grow={93} />
                        <Gap $size={6} />
                        <Header title="Hierarchy" />
                        <LayerControls>
                            <BlendMode>
                                <select aria-label="Blend mode" defaultValue="Normal">
                                    <option>Normal</option>
                                </select>
                                <Arrow size={10} />
                            </BlendMode>
                            <Opacity>
                                <input aria-label="Opacity" value={opacity} onChange={onOpacity} />
                                <div>
                                    <button type="button" aria-label="Increase"><Arrow dir="up" size={6} color="#444" /></button>
                                    <button type="button" aria-label="Decrease"><Arrow size={6} color="#444" /></button>
                                </div>
                            </Opacity>
                            <Slider type="range" aria-label="Opacity slider" min="0" max="255" value={opacity} onChange={onOpacity} />
                            <ToolButton type="button" aria-label="Reset"><Icon name="resetGrey" /></ToolButton>
                        </LayerControls>
                        <LayerTools>
                            <Tools items={["layerNew", "layerCube", "|", "layerUp", "layerDown", "cross", "layerCopy"]} wide />
                        </LayerTools>
                    </Column>
                </Main>
                <StatusBar>
                    <StatusLeft><Progress /></StatusLeft>
                    <StatusMiddle>
                        <svg width="28" height="18" aria-hidden="true">
                            <path d="M10.500 2.500v11l3-3 2 5 2-1-2-4h3.500z" fill="#fff" stroke="#222" />
                        </svg>
                        <Value>0</Value>
                        <Value $wide>, 0</Value>
                        <svg width="16" height="16" aria-hidden="true">
                            <path d="M1.500 5V1.500H5M11 1.500h3.500V5M14.500 11v3.500H11M5 14.500H1.500V11M2 2l4 4M14 2l-4 4M14 14l-4-4M2 14l4-4" fill="none" stroke="#111" strokeWidth="1.200" />
                        </svg>
                    </StatusMiddle>
                    <Pixel />
                    <Value>0</Value>
                    <Value>, 0</Value>
                    <Value>, 0</Value>
                    <Value>, 0</Value>
                    <span>00000000</span>
                </StatusBar>
            </Window>
        </Desktop>
    )
}

export default App;
